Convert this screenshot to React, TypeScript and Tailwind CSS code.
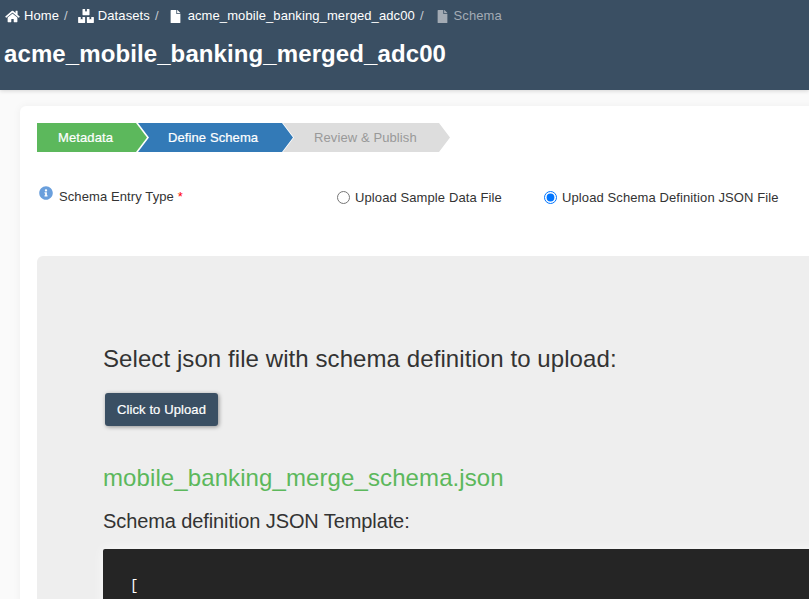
import React from "react";
import { FaHome, FaBoxes, FaFile, FaInfoCircle } from "react-icons/fa";

function Crumb({ icon, label, dim, sep, gap }: { icon: React.ReactNode; label: string; dim?: boolean; sep?: boolean; gap: string }) {
  return (
    <div className={`flex items-center ${dim ? "text-[#a3abb4]" : "text-white"}`}>
      <span className={`flex items-center ${gap}`}>{icon}</span>
      <span>{label}</span>
      {sep && <span className="ml-[5px] text-[#c4cbd2]">/</span>}
    </div>
  );
}

export default function App() {
  return (
    <div className="w-[809px] h-[599px] overflow-hidden bg-[#fafafa] font-['Liberation_Sans',Arial,sans-serif] text-[#333333]">
      <header className="h-[90px] bg-[#3a4f63] pl-[5px] shadow-[0_1px_4px_rgba(0,0,0,0.15)]">
        <nav className="flex items-center h-[32px] text-[13px] tracking-[0.1px] gap-[7px]">
          <Crumb icon={<FaHome className="w-[15px] h-[13px]" />} gap="mr-[4px]" label="Home" sep />
          <Crumb icon={<FaBoxes className="w-[16px] h-[14px]" />} gap="ml-[3px] mr-[4px]" label="Datasets" sep />
          <Crumb icon={<FaFile className="w-[11px] h-[13px]" />} gap="ml-[4px] mr-[7px]" label="acme_mobile_banking_merged_adc00" sep />
          <Crumb icon={<FaFile className="w-[11px] h-[13px]" />} gap="ml-[6px] mr-[6px]" label="Schema" dim />
        </nav>
        <h1 className="-ml-[1px] mt-[4px] text-[24px] leading-[36px] tracking-[0.1px] font-bold text-white">acme_mobile_banking_merged_adc00</h1>
      </header>

      <main className="pl-[20px] pt-[16px]">
        <section className="w-[900px] h-[600px] bg-white rounded-[6px] shadow-[0_0_8px_rgba(0,0,0,0.05)] pl-[17px] pt-[17px]">
          <div className="flex h-[29px] text-[13px] tracking-[0.1px]">
            <div className="w-[110px] bg-[#5cb85c] text-white [-webkit-text-stroke:0.2px_white] flex items-center pl-[21px] [clip-path:polygon(0_0,99px_0,110px_50%,99px_100%,0_100%)]">Metadata</div>
            <div className="-ml-[9px] w-[155px] bg-[#337ab7] text-white [-webkit-text-stroke:0.2px_white] flex items-center pl-[30px] [clip-path:polygon(0_0,144px_0,155px_50%,144px_100%,0_100%,11px_50%)]">Define Schema</div>
            <div className="-ml-[10px] w-[167px] bg-[#dddddd] text-[#999999] flex items-center pl-[31px] [clip-path:polygon(0_0,156px_0,167px_50%,156px_100%,0_100%,11px_50%)]">Review &amp; Publish</div>
          </div>

          <div className="h-[104px] text-[13px] tracking-[0.1px]">
            <div className="flex pt-[33px]">
              <div className="flex items-start w-[299px] pl-[2px]">
                <FaInfoCircle className="w-[14px] h-[14px] text-[#6a9fdc] mt-[1px]" />
                <span className="ml-[6px] mt-[2px]">Schema Entry Type <span className="text-[#ff0000]">*</span></span>
              </div>
              <label className="flex items-center w-[208px] h-[16px] mt-[5px]">
                <input type="radio" name="t" className="w-[13px] h-[13px] m-0 ml-[1px] -mt-[1px]" />
                <span className="ml-[5px]">Upload Sample Data File</span>
              </label>
              <label className="flex items-center h-[16px] mt-[5px]">
                <input type="radio" name="t" defaultChecked className="w-[13px] h-[13px] m-0 -mt-[1px]" />
                <span className="ml-[5px]">Upload Schema Definition JSON File</span>
              </label>
            </div>
          </div>

          <div className="bg-[#eeeeee] rounded-[6px] h-[500px] pl-[66px] pt-[89px]">
            <h2 className="text-[24px] leading-[28px] tracking-[0.08px]">Select json file with schema definition to upload:</h2>
            <button className="block mt-[20px] ml-[2px] w-[113px] h-[33px] bg-[#3a4f63] text-white text-[13px] tracking-[0.1px] [-webkit-text-stroke:0.2px_white] rounded-[3px] shadow-[1px_1px_4px_rgba(0,0,0,0.4)]">Click to Upload</button>
            <p className="mt-[35px] text-[24px] leading-[34px] tracking-[0.1px] text-[#5cb85c]">mobile_banking_merge_schema.json</p>
            <p className="mt-[14px] text-[20px] leading-[24px] tracking-[-0.1px]">Schema definition JSON Template:</p>
            <pre className="mt-[16px] h-[200px] bg-[#252525] text-white font-['Liberation_Mono',monospace] text-[14px] leading-[20px] pl-[27px] pt-[27px] rounded-[2px] shadow-[0_0_12px_rgba(255,255,255,0.7)]">[</pre>
          </div>
        </section>
      </main>
    </div>
  );
}
